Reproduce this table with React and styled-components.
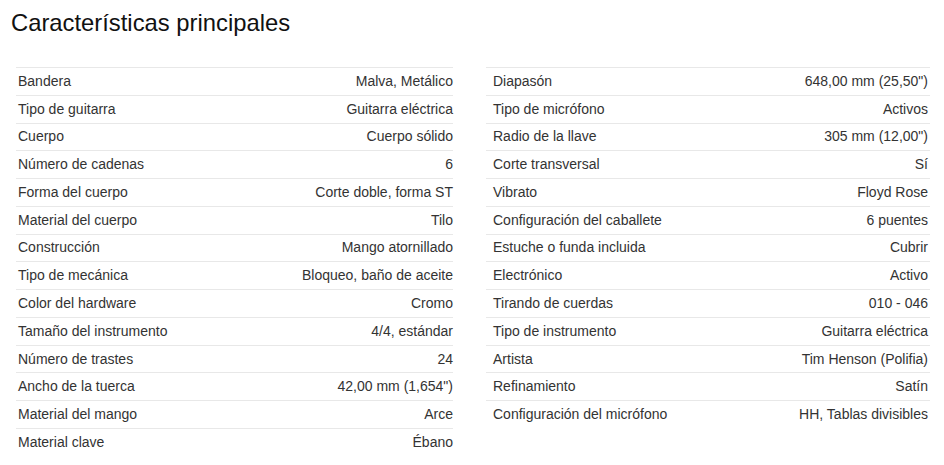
import React from "react";
import styled, { createGlobalStyle } from "styled-components";

const GlobalStyle = createGlobalStyle`
  body {
    margin: 0;
    background: #fff;
    font-family: "Liberation Sans", Arial, sans-serif;
  }
`;

const Page = styled.div`
  width: 944px;
  height: 465px;
  overflow: hidden;
  padding: 8px 0 0 11px;
  box-sizing: border-box;
`;

const Title = styled.h2`
  margin: 0;
  font-size: 23.8px;
  font-weight: 400;
  line-height: 30px;
  color: #111;
`;

const Columns = styled.div`
  display: grid;
  grid-template-columns: 437px 444px;
  column-gap: 33px;
  margin: 29px 0 0 5px;
`;

const SpecList = styled.div`
  display: flex;
  flex-direction: column;
`;

const Row = styled.div`
  display: flex;
  justify-content: space-between;
  align-items: center;
  border-top: 1px solid #e8e8e8;
  height: 27.77px;
  box-sizing: border-box;
  padding-left: ${(p) => (p.right ? "7px" : "2px")};
  padding-right: ${(p) => (p.right ? "2px" : "0")};
  font-size: 14px;
  line-height: 19px;
  color: #333;
`;

const Label = styled.span``;

const Value = styled.span`
  text-align: right;
`;

const left = [
  ["Bandera", "Malva, Metálico"],
  ["Tipo de guitarra", "Guitarra eléctrica"],
  ["Cuerpo", "Cuerpo sólido"],
  ["Número de cadenas", "6"],
  ["Forma del cuerpo", "Corte doble, forma ST"],
  ["Material del cuerpo", "Tilo"],
  ["Construcción", "Mango atornillado"],
  ["Tipo de mecánica", "Bloqueo, baño de aceite"],
  ["Color del hardware", "Cromo"],
  ["Tamaño del instrumento", "4/4, estándar"],
  ["Número de trastes", "24"],
  ["Ancho de la tuerca", "42,00 mm (1,654\")"],
  ["Material del mango", "Arce"],
  ["Material clave", "Ébano"],
];

const right = [
  ["Diapasón", "648,00 mm (25,50\")"],
  ["Tipo de micrófono", "Activos"],
  ["Radio de la llave", "305 mm (12,00\")"],
  ["Corte transversal", "Sí"],
  ["Vibrato", "Floyd Rose"],
  ["Configuración del caballete", "6 puentes"],
  ["Estuche o funda incluida", "Cubrir"],
  ["Electrónico", "Activo"],
  ["Tirando de cuerdas", "010 - 046"],
  ["Tipo de instrumento", "Guitarra eléctrica"],
  ["Artista", "Tim Henson (Polifia)"],
  ["Refinamiento", "Satín"],
  ["Configuración del micrófono", "HH, Tablas divisibles"],
];

const App = () => {
  return (
    <Page>
      <GlobalStyle />
      <Title>Características principales</Title>
      <Columns>
        <SpecList>
          {left.map(([k, v]) => (
            <Row key={k}>
              <Label>{k}</Label>
              <Value>{v}</Value>
            </Row>
          ))}
        </SpecList>
        <SpecList>
          {right.map(([k, v]) => (
            <Row key={k} right>
              <Label>{k}</Label>
              <Value>{v}</Value>
            </Row>
          ))}
        </SpecList>
      </Columns>
    </Page>
  );
};

export default App;
